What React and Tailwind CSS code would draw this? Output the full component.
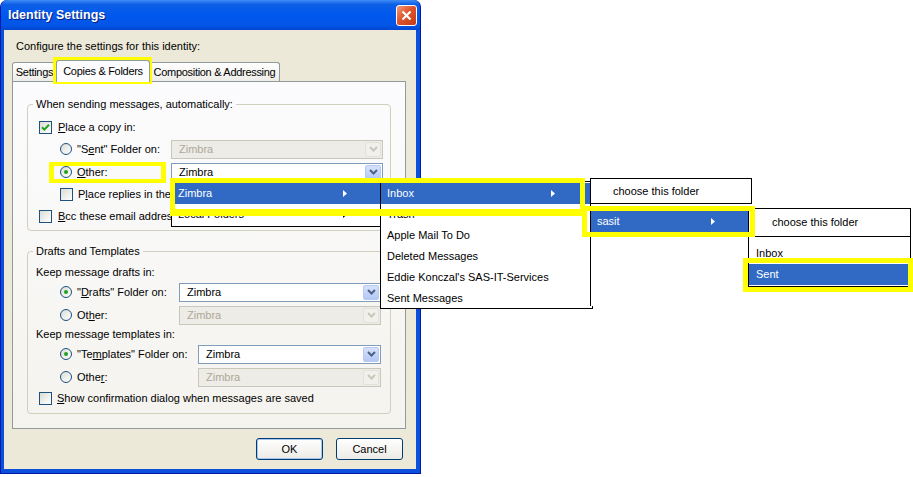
import clsx from "clsx";

// little XP-style form widgets
const Radio = ({ checked }) => (
  <span className="w-[12px] h-[12px] shrink-0 rounded-full border border-[#1C5180] bg-[linear-gradient(135deg,#DCDCD4,#FFFFFF)] flex items-center justify-center">
    {checked && <span className="w-[4px] h-[4px] rounded-full bg-[#21A121]" />}
  </span>
);

const Check = ({ checked }) => (
  <span className="w-[13px] h-[13px] shrink-0 border border-[#1C5180] bg-[linear-gradient(135deg,#DCDCD4,#FFFFFF)] flex items-center justify-center">
    {checked && (
      <svg width="9" height="9" viewBox="0 0 9 9">
        <path d="M1 4.3l2.3 2.3L8 1.8" fill="none" stroke="#21A121" strokeWidth="2" />
      </svg>
    )}
  </span>
);

const Combo = ({ disabled, className }) => (
  <div
    className={clsx(
      "h-[19px] flex items-center border pl-[7px] pr-[1px]",
      disabled ? "border-[#C9C7BA] bg-[#EDECE6] text-[#ACA899]" : "border-[#7F9DB9] bg-white",
      className
    )}
  >
    <span className="flex-1">Zimbra</span>
    <span
      className={clsx(
        "w-[16px] h-[15px] rounded-[2px] border flex items-center justify-center",
        disabled ? "border-[#E3E2DA] bg-[#F1F0EA]" : "border-[#B6C9F3] bg-[linear-gradient(to_bottom,#D6E2FC,#B3C8F6)]"
      )}
    >
      <svg width="9" height="6" viewBox="0 0 9 6">
        <path d="M1 1l3.5 3.5L8 1" fill="none" stroke={disabled ? "#C9C7BA" : "#4D6185"} strokeWidth="2" />
      </svg>
    </span>
  </div>
);

const Key = ({ children }) => <span className="underline underline-offset-[1px]">{children}</span>;

const Arrow = ({ white }) => (
  <svg width="4" height="7" viewBox="0 0 4 7">
    <polygon points="0,0 4,3.5 0,7" fill={white ? "#FFFFFF" : "#000000"} />
  </svg>
);

const Item = ({ label, active, arrowRight, pl = "pl-[6px]" }) => (
  <div className={clsx("h-[21px] flex items-center", pl, active ? "bg-[#316AC5] text-white" : "text-black")}>
    <span className="flex-1">{label}</span>
    {arrowRight !== undefined && (
      <span style={{ marginRight: arrowRight }}>
        <Arrow white={active} />
      </span>
    )}
  </div>
);

const Mark = ({ className }) => <div className={clsx("absolute border-[#FFFF00] pointer-events-none", className)} />;

const Tab = ({ children, selected, className }) => (
  <div
    className={clsx(
      "flex items-center justify-center border border-b-0 border-[#919B9C] rounded-t-[3px] tracking-[-0.3px] whitespace-nowrap",
      selected ? "h-[22px] bg-[#FCFCFE] relative z-10" : "h-[20px] bg-[linear-gradient(to_bottom,#FFFFFF,#ECEBE6)]",
      className
    )}
  >
    {children}
  </div>
);

export default function App() {
  return (
    <div className="relative w-[913px] h-[477px] overflow-hidden bg-white text-[11px] leading-[13px] text-black font-['Liberation_Sans',Arial,sans-serif]">
      {/* dialog window */}
      <div className="w-[421px] h-[474px] flex flex-col rounded-t-[7px] bg-[#0B4FDB] border border-t-0 border-[#0019A8]">
        <div className="h-[30px] shrink-0 flex items-center pl-[7px] pr-[3px] rounded-t-[7px] bg-[linear-gradient(to_bottom,#3E8DF6_0%,#0D5FE6_15%,#0058EE_50%,#0355E6_85%,#0346D0_100%)]">
          <span className="flex-1 text-white font-bold text-[12.5px] [text-shadow:1px_1px_0_#0A1E7E]">Identity Settings</span>
          <button className="w-[21px] h-[21px] rounded-[3px] border border-white bg-[linear-gradient(135deg,#F19B7C,#E0542C_45%,#C23C18)] flex items-center justify-center">
            <svg width="11" height="11" viewBox="0 0 11 11">
              <path d="M1.5 1.5l8 8M9.5 1.5l-8 8" stroke="#FFFFFF" strokeWidth="2.2" />
            </svg>
          </button>
        </div>

        <div className="flex-1 ml-[3px] mr-[4px] mb-[4px] bg-[#ECE9D8] flex flex-col">
          <div className="pl-[12px] pt-[10px] h-[30px]">Configure the settings for this identity:</div>

          {/* tab strip */}
          <div className="flex items-end ml-[8px] h-[22px] -mb-[1px]">
            <Tab className="w-[45px]">Settings</Tab>
            <Tab selected className="w-[94px] -ml-[1px] -mr-[1px]">Copies &amp; Folders</Tab>
            <Tab className="w-[131px]">Composition &amp; Addressing</Tab>
          </div>

          {/* tab panel */}
          <div className="ml-[8px] w-[394px] h-[348px] border border-[#919B9C] bg-[linear-gradient(to_bottom,#FCFCFE,#F4F3EE)] pl-[14px] pt-[16px]">
            <fieldset className="w-[364px] h-[133px] border border-[#D0D0BF] rounded-[4px]">
              <legend className="ml-[5px] px-[3px]">When sending messages, automatically:</legend>
              <div className="pt-[5px]">
                <div className="h-[22px] flex items-center pl-[11px] gap-[6px]">
                  <Check checked />
                  <span><Key>P</Key>lace a copy in:</span>
                </div>
                <div className="h-[22px] flex items-center pl-[32px] gap-[5px]">
                  <Radio />
                  <span>"S<Key>e</Key>nt" Folder on:</span>
                  <Combo disabled className="ml-auto mr-[7px] w-[212px]" />
                </div>
                <div className="h-[22px] mt-[1px] flex items-center pl-[32px] gap-[5px]">
                  <Radio checked />
                  <span><Key>O</Key>ther:</span>
                  <Combo className="ml-auto mr-[7px] w-[212px]" />
                </div>
                {/* the open popup hides the rest of these two labels */}
                <div className="h-[22px] flex items-center pl-[32px] gap-[5px]">
                  <Check />
                  <span className="whitespace-nowrap">P<Key>l</Key>ace replies in the</span>
                </div>
                <div className="h-[22px] flex items-center pl-[11px] gap-[6px]">
                  <Check />
                  <span className="whitespace-nowrap"><Key>B</Key>cc these email addres</span>
                </div>
              </div>
            </fieldset>

            <fieldset className="mt-[14px] w-[364px] h-[169px] border border-[#D0D0BF] rounded-[4px]">
              <legend className="ml-[5px] px-[3px]">Drafts and Templates</legend>
              <div className="pt-[4px]">
                <div className="h-[20px] flex items-center pl-[8px]">Keep message drafts in:</div>
                <div className="h-[20px] flex items-center pl-[32px] gap-[5px]">
                  <Radio checked />
                  <span>"<Key>D</Key>rafts" Folder on:</span>
                  <Combo className="ml-auto mr-[9px] w-[202px]" />
                </div>
                <div className="h-[20px] mt-[3px] flex items-center pl-[32px] gap-[5px]">
                  <Radio />
                  <span>Ot<Key>h</Key>er:</span>
                  <Combo disabled className="ml-auto mr-[9px] w-[202px]" />
                </div>
                <div className="h-[19px] flex items-center pl-[8px]">Keep message templates in:</div>
                <div className="h-[20px] flex items-center pl-[32px] gap-[5px]">
                  <Radio checked />
                  <span>"Te<Key>m</Key>plates" Folder on:</span>
                  <Combo className="ml-auto mr-[9px] w-[183px]" />
                </div>
                <div className="h-[20px] mt-[3px] flex items-center pl-[32px] gap-[5px]">
                  <Radio />
                  <span>Othe<Key>r</Key>:</span>
                  <Combo disabled className="ml-auto mr-[9px] w-[183px]" />
                </div>
                <div className="h-[22px] flex items-center pl-[11px] gap-[5px]">
                  <Check />
                  <span><Key>S</Key>how confirmation dialog when messages are saved</span>
                </div>
              </div>
            </fieldset>
          </div>

          {/* dialog buttons */}
          <div className="flex justify-end gap-[13px] pr-[13px] mt-[9px]">
            <button className="w-[67px] h-[22px] rounded-[3px] border border-[#003C74] bg-[linear-gradient(to_bottom,#FFFFFF,#ECEBE6)] shadow-[inset_0_0_0_1px_#A9C4EE]">OK</button>
            <button className="w-[67px] h-[22px] rounded-[3px] border border-[#003C74] bg-[linear-gradient(to_bottom,#FFFFFF,#ECEBE6)]">Cancel</button>
          </div>
        </div>
      </div>

      {/* cascading folder popups */}
      <div className="absolute left-[171px] top-[181px] w-[210px] h-[46px] bg-white border border-black pt-[1px]">
        <Item label="Zimbra" active arrowRight={33} />
        <Item label="Local Folders" arrowRight={33} />
      </div>

      <div className="absolute left-[380px] top-[181px] w-[213px] h-[128px] bg-white border border-black pt-[1px]">
        <Item label="Inbox" active arrowRight={37} />
        <Item label="Trash" />
        <Item label="Apple Mail To Do" />
        <Item label="Deleted Messages" />
        <Item label="Eddie Konczal's SAS-IT-Services" />
        <Item label="Sent Messages" />
      </div>

      {/* half-painted popup: only its top and left edges show */}
      <div className="absolute left-[590px] top-[178px] w-[162px] h-[128px] bg-white border-t border-l border-black">
        <div className="h-[25px] flex items-center pl-[22px] border-b border-r border-black">choose this folder</div>
        <div className="pt-[7px]">
          <Item label="sasit" active arrowRight={37} />
        </div>
      </div>

      <div className="absolute left-[748px] top-[208px] w-[163px] h-[79px] bg-white border border-black">
        <div className="h-[28px] flex items-center pl-[23px] border-b border-black">choose this folder</div>
        <div className="pt-[6px]">
          <Item label="Inbox" pl="pl-[7px]" />
          <Item label="Sent" active pl="pl-[7px]" />
        </div>
      </div>

      {/* yellow callouts */}
      <Mark className="left-[53px] top-[57px] w-[99px] h-[27px] border-[5px]" />
      <Mark className="left-[49px] top-[162px] w-[117px] h-[21px] border-x-[5px] border-y-[4px]" />
      <Mark className="left-[170px] top-[178px] w-[415px] h-[38px] border-[5px] border-b-[7px]" />
      <Mark className="left-[582px] top-[206px] w-[173px] h-[31px] border-[5px]" />
      <Mark className="left-[743px] top-[258px] w-[170px] h-[34px] border-[5px]" />
    </div>
  );
}
